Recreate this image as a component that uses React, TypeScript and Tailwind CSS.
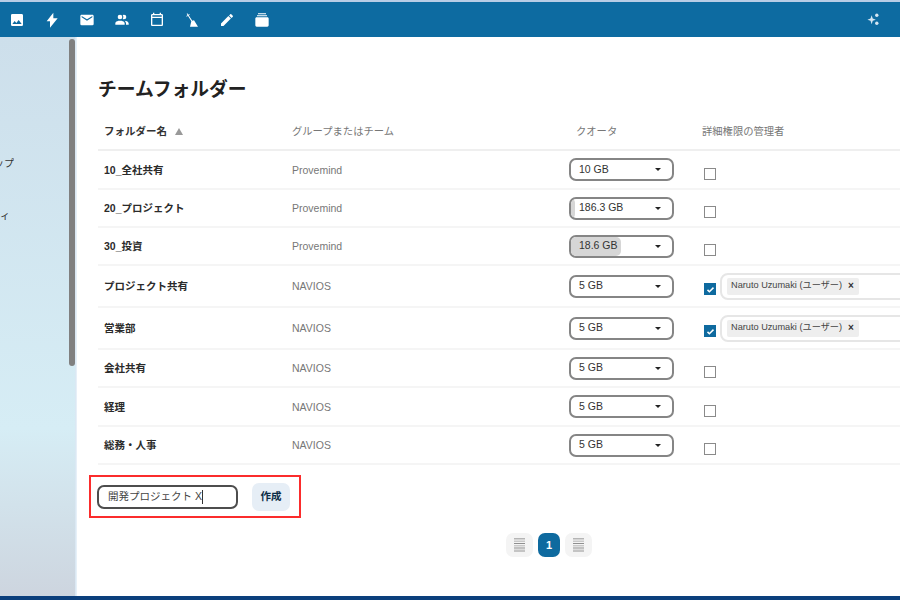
import React from 'react';

const navIcons = [
  'M8.5,13.5L11,16.5L14.5,12L19,18H5M21,19V5C21,3.89 20.1,3 19,3H5A2,2 0 0,0 3,5V19A2,2 0 0,0 5,21H19A2,2 0 0,0 21,19Z',
  'M10 14H4L14 1V9.5H20.5L9 23.5V14Z',
  'M20,8L12,13L4,8V6L12,11L20,6M20,4H4C2.89,4 2,4.89 2,6V18A2,2 0 0,0 4,20H20A2,2 0 0,0 22,18V6C22,4.89 21.1,4 20,4Z',
  'M16 17V19H2V17S2 13 9 13 16 17 16 17M12.5 7.5A3.5 3.5 0 1 0 9 11A3.5 3.5 0 0 0 12.5 7.5M15.94 13A5.32 5.32 0 0 1 18 17V19H22V17S22 13.37 15.94 13M15 4A3.39 3.39 0 0 0 13.07 4.59A5 5 0 0 1 13.07 10.41A3.39 3.39 0 0 0 15 11A3.5 3.5 0 0 0 15 4Z',
  'M19 3H18V1H16V3H8V1H6V3H5C3.89 3 3 3.9 3 5V19C3 20.11 3.9 21 5 21H19C20.11 21 21 20.11 21 19V5C21 3.9 20.11 3 19 3M19 19H5V9H19V19M19 7H5V5H19V7Z',
  'M4 2.5L5 2L12.5 13L15 12.5L21 22H9L11 14ZM3.5 6L8 3L8.5 4L4 7Z',
  'M20.71,7.04C21.1,6.65 21.1,6 20.71,5.63L18.37,3.29C18,2.9 17.35,2.9 16.96,3.29L15.12,5.12L18.87,8.87M3,17.25V21H6.75L17.81,9.93L14.06,6.18L3,17.25Z',
  'M6 2H18V3.5H6ZM4.5 5H19.5V6.5H4.5ZM4 8H20C21.1 8 22 8.9 22 10V20C22 21.1 21.1 22 20 22H4C2.9 22 2 21.1 2 20V10C2 8.9 2.9 8 4 8Z',
];

type Row = {
  name: string;
  group: string;
  quota: string;
  height: string;
  used?: string;
  admin?: boolean;
};

const rows: Row[] = [
  { name: '10_全社共有', group: 'Provemind', quota: '10 GB', height: 'h-[39px]' },
  { name: '20_プロジェクト', group: 'Provemind', quota: '186.3 GB', height: 'h-[38px]', used: 'w-[4px]' },
  { name: '30_投資', group: 'Provemind', quota: '18.6 GB', height: 'h-[38px]', used: 'w-[50px]' },
  { name: 'プロジェクト共有', group: 'NAVIOS', quota: '5 GB', height: 'h-[42px]', admin: true },
  { name: '営業部', group: 'NAVIOS', quota: '5 GB', height: 'h-[42px]', admin: true },
  { name: '会社共有', group: 'NAVIOS', quota: '5 GB', height: 'h-[38px]' },
  { name: '経理', group: 'NAVIOS', quota: '5 GB', height: 'h-[39px]' },
  { name: '総務・人事', group: 'NAVIOS', quota: '5 GB', height: 'h-[38px]' },
];

function StripeIcon() {
  return (
    <svg width="11" height="14" viewBox="0 0 11 14" fill="#b5b5b5">
      <rect y="0" width="11" height="1.5" />
      <rect y="2.5" width="11" height="1.5" fill="#c9c9c9" />
      <rect y="5" width="11" height="1" fill="#8f8f8f" />
      <rect y="7" width="11" height="1.5" fill="#c9c9c9" />
      <rect y="9.5" width="11" height="1" fill="#8f8f8f" />
      <rect y="11.5" width="11" height="2.5" fill="#c4c4c4" />
    </svg>
  );
}

function QuotaSelect({ row }: { row: Row }) {
  return (
    <div className="relative flex h-[23px] w-[105px] items-center overflow-hidden rounded-[7px] border-2 border-[#858585] bg-white pl-[8px] pr-[11px]">
      {row.used && <div className={`absolute left-0 top-0 h-full rounded-r-[5px] bg-[#d6d6d6] ${row.used}`} />}
      <span className="relative flex-1 text-[10.5px] text-[#333]">{row.quota}</span>
      <span className="h-0 w-0 border-x-[3px] border-t-[3px] border-x-transparent border-t-[#222]" />
    </div>
  );
}

function AdminCell({ active }: { active?: boolean }) {
  return (
    <div className="flex h-full items-center">
      {active ? (
        <span className="mt-[6px] flex h-[12px] w-[12px] shrink-0 items-center justify-center bg-[#0e6a9f]">
          <svg width="9" height="9" viewBox="0 0 24 24" fill="none" stroke="white" strokeWidth="4">
            <path d="M4 13l5 5L20 7" />
          </svg>
        </span>
      ) : (
        <span className="mt-[8px] h-[12px] w-[12px] shrink-0 border border-[#8a8a8a] bg-white" />
      )}
      {active && (
        <div className="ml-[4px] flex h-[27px] w-[220px] shrink-0 items-center rounded-[8px] border-2 border-[#e6e6e6] pl-[5px]">
          <span className="flex h-[17px] items-center gap-[6px] rounded-[2px] bg-[#eeeeee] pl-[4px] pr-[5px] text-[9.2px] text-[#444]">
            Naruto Uzumaki (ユーザー)
            <span className="text-[10px] font-bold leading-none text-[#333]">×</span>
          </span>
        </div>
      )}
    </div>
  );
}

export default function App() {
  return (
    <div
      className="flex h-[600px] w-[900px] flex-col overflow-hidden bg-white"
      style={{ fontFamily: '"Liberation Sans", "Noto Sans CJK JP", sans-serif' }}
    >
      <header className="flex h-[37px] shrink-0 items-center border-t-2 border-[#b7cde6] bg-[#0d6ba1] pl-[9px] pr-[19px]">
        <div className="flex flex-1 items-center gap-[19px]">
          {navIcons.map(d => (
            <svg key={d} width="16" height="16" viewBox="0 0 24 24" fill="white">
              <path d={d} />
            </svg>
          ))}
        </div>
        <svg width="15" height="15" viewBox="0 0 16 16" fill="#d5e6f2">
          <path d="M6 3.5L7.2 7L10.5 8.2L7.2 9.4L6 13L4.8 9.4L1.5 8.2L4.8 7Z" />
          <circle cx="11.5" cy="3.5" r="1.8" />
          <circle cx="11.5" cy="12" r="1.8" />
        </svg>
      </header>

      <div className="flex min-h-0 flex-1">
        <aside className="relative w-[76px] shrink-0 border-r border-[#dbe8f3] bg-gradient-to-b from-[#cddfeb] via-[#d6edf5] via-70% to-[#cdd5df] text-[10px] text-[#333]">
          <div className="flex w-[14px] justify-end overflow-hidden pt-[119px] whitespace-nowrap">ップ</div>
          <div className="flex w-[10px] justify-end overflow-hidden pt-[37px] whitespace-nowrap">ィ</div>
          <div className="absolute left-[69px] top-[2px] h-[327px] w-[6px] rounded-[3px] bg-[#808080]" />
        </aside>

        <main className="min-w-0 flex-1 overflow-hidden border-l border-[#e6f0f8] pl-[21px]">
          <h1 className="pt-[39px] text-[18.8px] font-bold leading-[28px] text-[#222]">チームフォルダー</h1>

          <div className="mt-[10px] w-[860px]">
            <div className="flex h-[37px] items-center border-b-2 border-[#efefef] text-[10.3px] text-[#777]">
              <div className="flex w-[194px] items-center gap-[8px] pl-[6px] text-[10.5px] font-bold text-[#333]">
                フォルダー名
                <span className="h-0 w-0 border-x-[4px] border-b-[7px] border-x-transparent border-b-[#999]" />
              </div>
              <div className="w-[277px]">グループまたはチーム</div>
              <div className="w-[133px] pl-[7px]">クオータ</div>
              <div>詳細権限の管理者</div>
            </div>

            {rows.map(row => (
              <div key={row.name} className={`flex items-center border-b-2 border-[#f5f5f5] ${row.height}`}>
                <div className="w-[194px] pl-[6px] pt-[2px] text-[10.5px] font-bold text-[#2b2b2b]">{row.name}</div>
                <div className="w-[277px] pt-[2px] text-[10.5px] text-[#777]">{row.group}</div>
                <div className="w-[134px]"><QuotaSelect row={row} /></div>
                <div className="h-full flex-1 pl-[1px]"><AdminCell active={row.admin} /></div>
              </div>
            ))}
          </div>

          <div className="-ml-[9px] mt-[10px] flex h-[43px] w-[212px] items-center border-2 border-[#fb2c2c] pl-[6px]">
            <div className="flex h-[24px] w-[141px] items-center rounded-[7px] border-2 border-[#4d4d4d] pl-[9px] pt-[1px] text-[10.5px] text-[#444]">
              開発プロジェクト X<span className="h-[14px] w-px bg-[#333]" />
            </div>
            <button className="ml-[14px] h-[28px] w-[38px] rounded-[7px] bg-[#e6eef6] text-[10.5px] font-bold text-[#0b2d46]">作成</button>
          </div>

          <div className="ml-[408px] mt-[15px] flex items-center gap-[5px]">
            <span className="flex h-[24px] w-[27px] items-center justify-center rounded-[7px] bg-[#f4f4f4]"><StripeIcon /></span>
            <span className="flex h-[24px] w-[22px] items-center justify-center rounded-[7px] bg-[#0e6a9f] text-[11px] font-bold text-white">1</span>
            <span className="flex h-[24px] w-[27px] items-center justify-center rounded-[7px] bg-[#f4f4f4]"><StripeIcon /></span>
          </div>
        </main>
      </div>

      <div className="h-[4px] shrink-0 bg-[#0b3f7c]" />
    </div>
  );
}
